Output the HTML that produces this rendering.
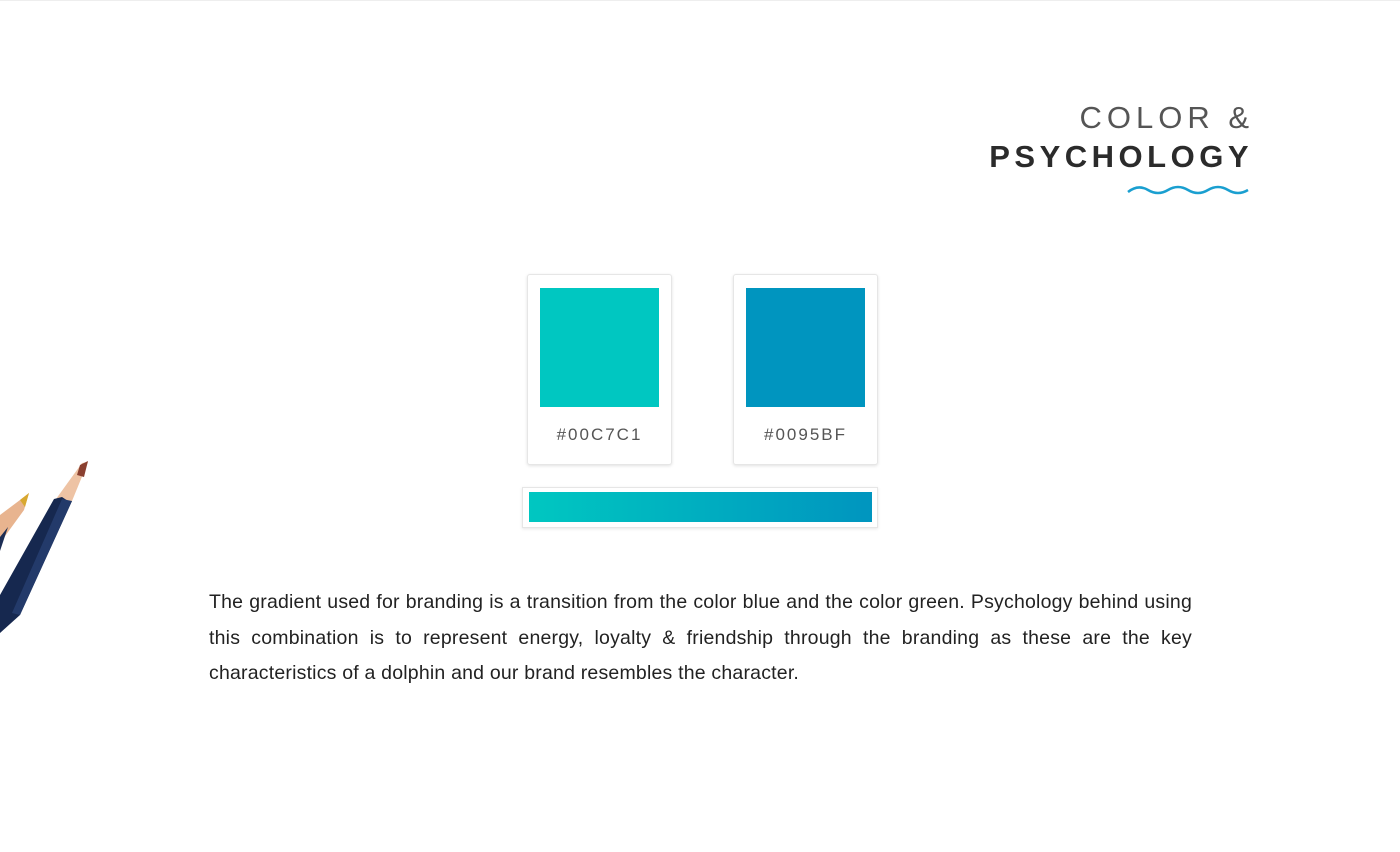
<!DOCTYPE html>
<html><head><meta charset="utf-8"><style>
html,body{margin:0;padding:0;background:#fff;width:1400px;height:852px;overflow:hidden;position:relative;font-family:"Liberation Sans",sans-serif}
.topline{position:absolute;left:0;top:0;width:1400px;height:1px;background:#eee}
.t1{position:absolute;right:146px;top:100px;font-size:31px;letter-spacing:5px;color:#555;font-weight:300}
.t2{position:absolute;right:147px;top:139px;font-size:31px;letter-spacing:4.5px;color:#2b2b2b;font-weight:bold}
.card{position:absolute;top:274px;width:143px;height:189px;background:#fff;border:1px solid #e6e6e6;border-radius:3px;box-shadow:0 1px 3px rgba(0,0,0,.12)}
.sw{position:absolute;left:12px;top:13px;width:119px;height:119px}
.lab{position:absolute;left:0;right:0;top:150px;text-align:center;font-size:17px;letter-spacing:2px;color:#555}
.bar{position:absolute;left:522px;top:487px;width:354px;height:39px;border:1px solid #e6e6e6;box-shadow:0 1px 3px rgba(0,0,0,.1);background:#fff}
.bar div{position:absolute;left:6px;top:4px;width:343px;height:30px;background:linear-gradient(90deg,#00c7c1,#0095bf)}
.txt{position:absolute;left:209px;top:585px;width:983px;font-size:19.5px;letter-spacing:0.2px;line-height:35.5px;color:#222}
.txt div{text-align:justify;text-align-last:justify;white-space:nowrap}
.txt div.l{text-align-last:left}
</style></head><body>
<div class="topline"></div>
<div class="t1">COLOR &amp;</div>
<div class="t2">PSYCHOLOGY</div>
<svg style="position:absolute;left:1126px;top:182px" width="124" height="16" viewBox="0 0 124 16">
<path d="M2 10 Q12 2 22 8 T42 8 T62 8 T82 8 T102 8 T122 8" fill="none" stroke="#1a9fd0" stroke-width="2.5"/>
</svg>
<div class="card" style="left:527px"><div class="sw" style="background:#00c7c1"></div><div class="lab">#00C7C1</div></div>
<div class="card" style="left:733px"><div class="sw" style="background:#0095bf"></div><div class="lab">#0095BF</div></div>
<div class="bar"><div></div></div>
<div class="txt">
<div>The gradient used for branding is a transition from the color blue and the color green. Psychology behind using</div>
<div>this combination is to represent energy, loyalty &amp; friendship through the branding as these are the key</div>
<div class="l">characteristics of a dolphin and our brand resembles the character.</div>
</div>
<svg style="position:absolute;left:0;top:455px" width="100" height="180" viewBox="0 0 100 180">
<polygon points="0,60 20,45 29,38 24,55 0,88" fill="#e8b48f"/>
<polygon points="20,45 29,38 25,52" fill="#d8a830"/>
<polygon points="0,82 8,72 0,96" fill="#1c2e55"/>
<polygon points="56,44 72,46 88,7 82,8" fill="#eec3a4"/>
<polygon points="80,10 88,6 84,22 77,20" fill="#8a4030"/>
<polygon points="54,44 62,42 68,46 72,46 20,160 0,178 0,140" fill="#16284f"/>
<polygon points="62,44 72,46 20,160 12,158" fill="#233a6a"/>
</svg>
</body></html>
